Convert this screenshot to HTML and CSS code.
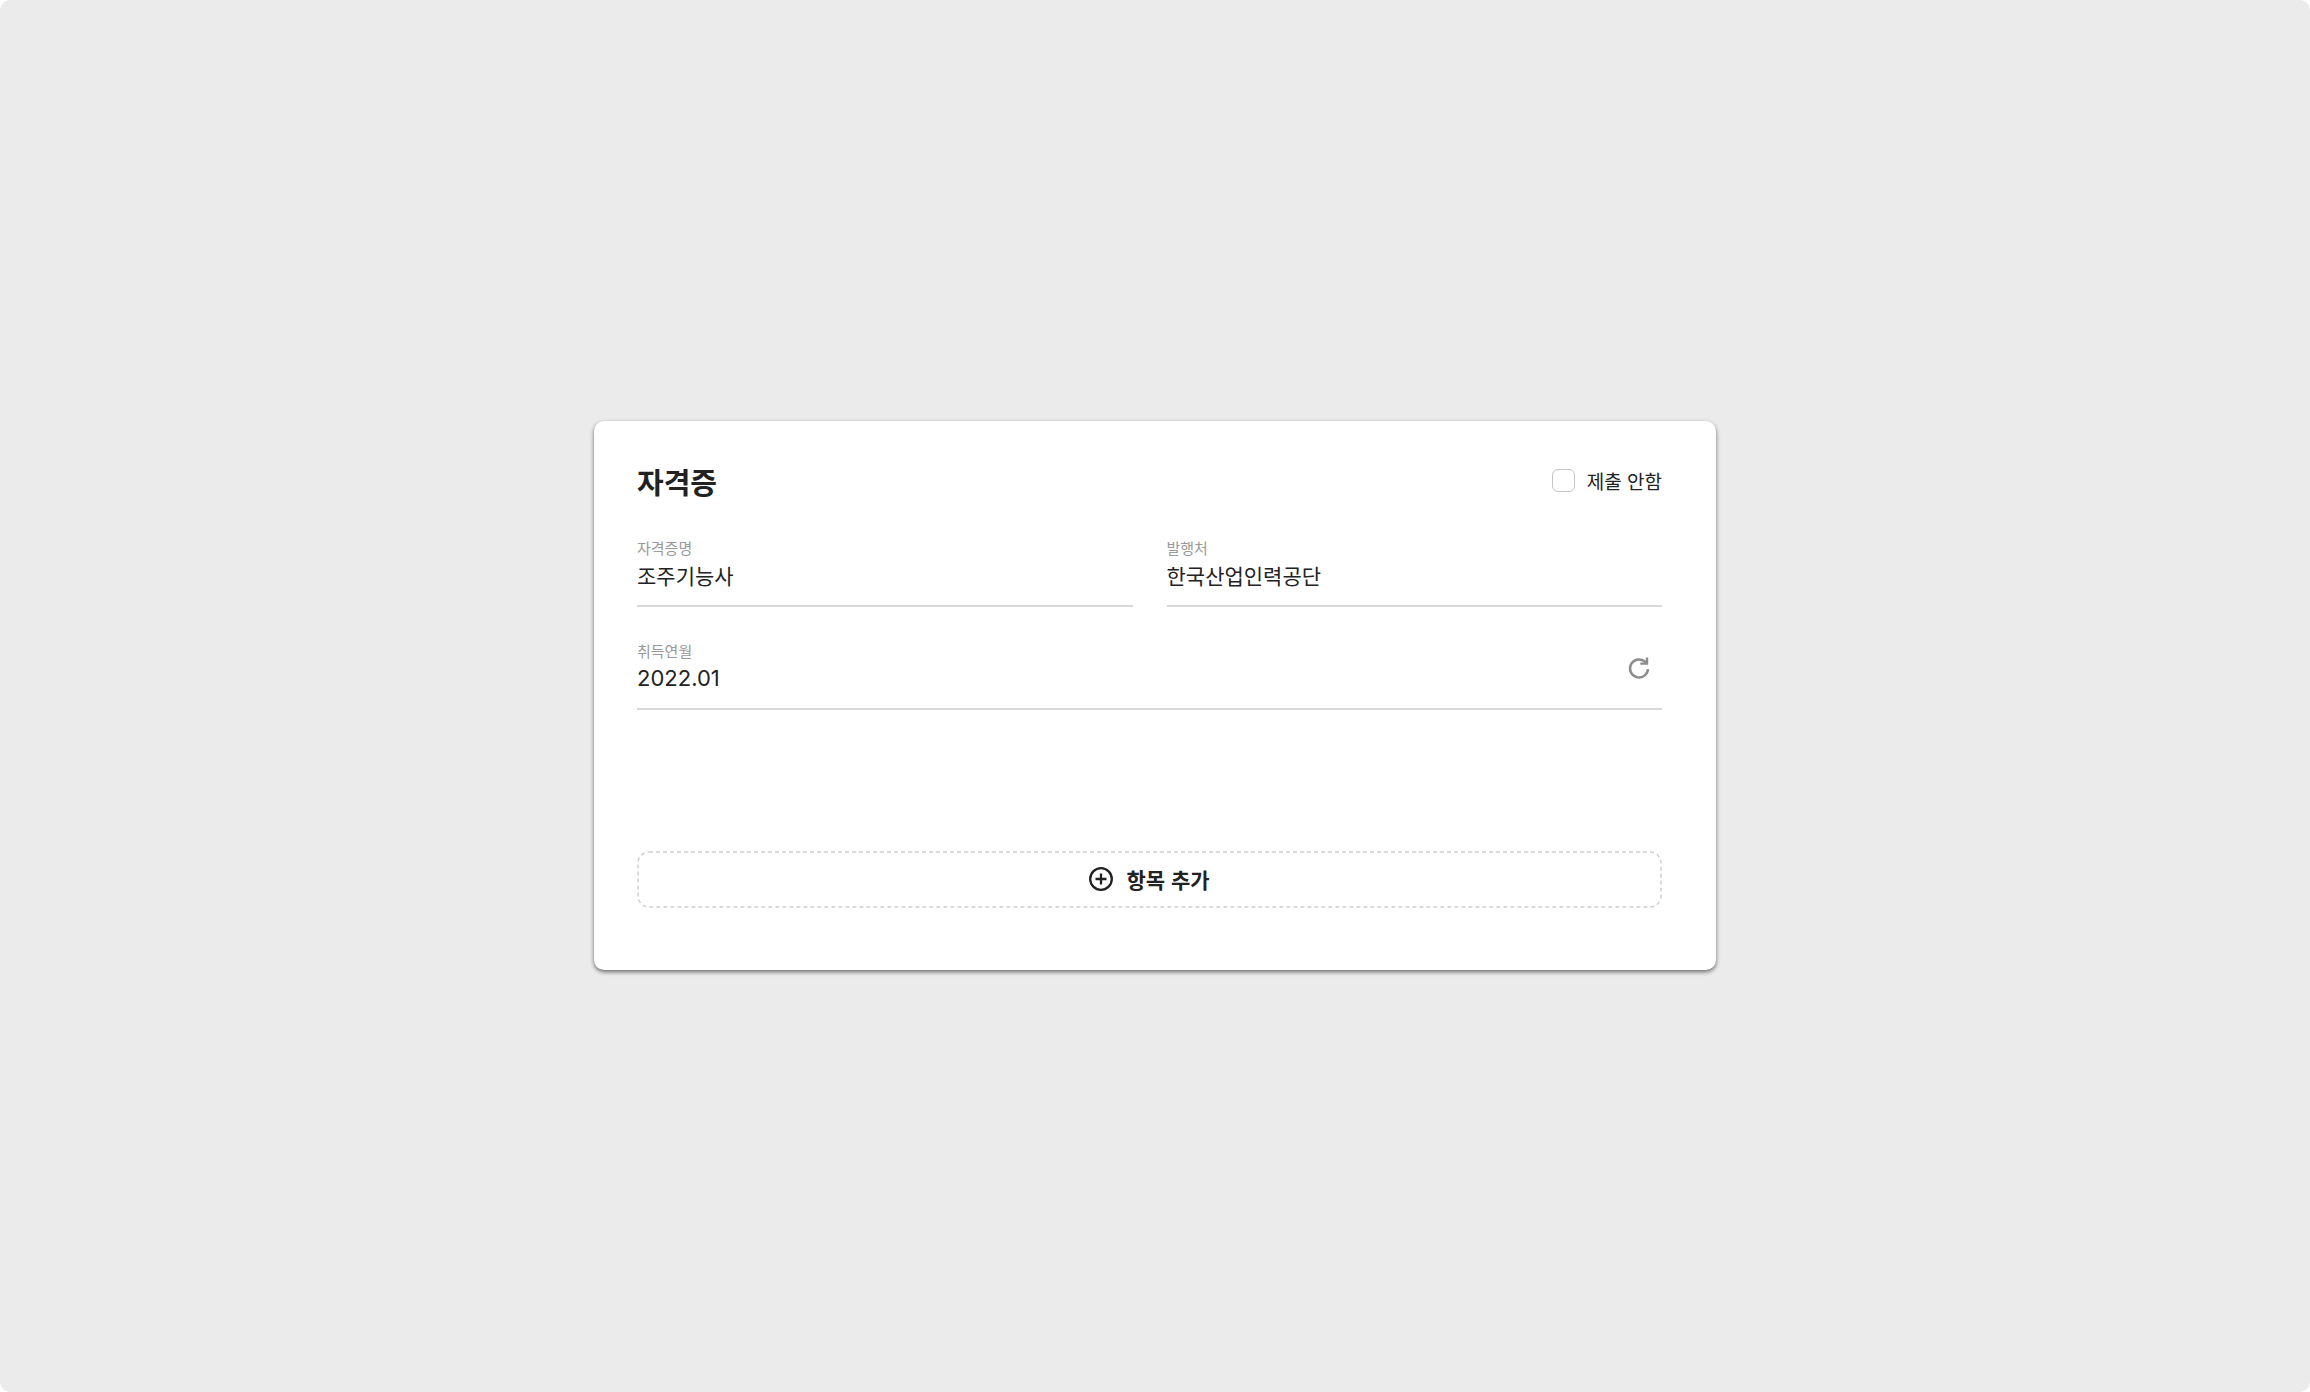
FILE: index.html
```
<!DOCTYPE html>
<html lang="ko">

<head>
  <meta charset="utf-8">
  <meta name="viewport" content="width=device-width, initial-scale=1">
  <title>자격증</title>
  <link rel="stylesheet" href="styles.css">
</head>

<body>
  <main class="page">
    <form class="card">
      <header class="card-header">
        <h1 class="title">자격증</h1>
        <label class="skip"><input type="checkbox" class="checkbox">제출 안함</label>
      </header>

      <div class="fields">
        <div class="field">
          <label for="name">자격증명</label>
          <input id="name" type="text" value="조주기능사">
        </div>
        <div class="field">
          <label for="issuer">발행처</label>
          <input id="issuer" type="text" value="한국산업인력공단">
        </div>
        <div class="field-row">
          <div class="field">
            <label for="date">취득연월</label>
            <input id="date" class="number" type="text" value="2022.01">
          </div>
          <button type="button" class="reset" aria-label="초기화">
            <svg width="24" height="24" viewBox="0 0 24 24" fill="none" stroke="currentColor" stroke-width="2.4">
              <path d="M21 13.200a9 9 0 1 1-3.600-7.900l2 1.500" />
              <path d="M20 1.500V7.600H13.300" />
            </svg>
          </button>
        </div>
      </div>

      <button type="button" class="add">
        <svg class="outline" width="100%" height="100%" aria-hidden="true">
          <rect class="dashes" x="1" y="1" rx="11" />
        </svg>
        <svg width="24" height="24" viewBox="0 0 24 24" fill="none" stroke="currentColor" stroke-width="2.300">
          <circle cx="12" cy="12" r="10.800" />
          <path d="M12 6.500v11M6.500 12h11" />
        </svg>
        <span>항목 추가</span>
      </button>
    </form>
  </main>
</body>

</html>
```
FILE: styles.css
```
* {
  box-sizing: border-box;
}

body {
  margin: 0;
  background: #fff;
  color: #222;
  font-family: "Noto Sans CJK KR", sans-serif;
}

.page {
  display: flex;
  align-items: center;
  justify-content: center;
  min-height: 100vh;
  padding-bottom: 2px;
  border-radius: 10px;
  background: #ebebeb;
}

.card {
  width: 100%;
  max-width: 1122px;
  padding: 43px 54px 62px 43px;
  border-radius: 10px;
  background: #fff;
  box-shadow: 0 2px 4px rgba(0, 0, 0, 0.55);
}

.card-header {
  display: flex;
  align-items: center;
  justify-content: space-between;
  height: 34px;
  margin-bottom: 40px;
}

.title {
  margin: 0;
  font-size: 29px;
  font-weight: 700;
  line-height: 34px;
}

.skip {
  display: flex;
  align-items: center;
  gap: 12px;
  font-size: 19px;
  line-height: 24px;
}

.checkbox {
  appearance: none;
  width: 23px;
  height: 23px;
  margin: 0;
  border: 1px solid #c4c4c4;
  border-radius: 6px;
  background: #fff;
}

.checkbox:checked {
  background: #222;
}

.fields {
  display: grid;
  grid-template-columns: 1fr 1fr;
  gap: 34px;
  margin-bottom: 141px;
}

.field {
  display: flex;
  flex-direction: column;
  gap: 2px;
  flex: 1;
  min-width: 0;
  padding-bottom: 15px;
  border-bottom: 2px solid #d8d8d8;
}

.field label {
  color: #999;
  font-size: 15px;
  line-height: 20px;
}

.field input {
  width: 100%;
  height: 30px;
  padding: 0;
  border: 0;
  outline: 0;
  background: none;
  color: inherit;
  font: inherit;
  font-size: 21px;
  line-height: 30px;
}

.field .number {
  font-family: Inter, sans-serif;
  font-size: 22px;
}

.field-row {
  display: flex;
  align-items: center;
  grid-column: 1 / -1;
  border-bottom: 2px solid #d8d8d8;
}

.field-row .field {
  border: 0;
}

.reset {
  display: flex;
  margin-right: 11px;
  padding: 0 0 12px;
  border: 0;
  background: none;
  color: #8c8c8c;
  cursor: pointer;
}

.add {
  position: relative;
  display: flex;
  align-items: center;
  justify-content: center;
  gap: 13px;
  width: 100%;
  height: 57px;
  padding: 0;
  border: 0;
  border-radius: 12px;
  background: none;
  color: #222;
  font: inherit;
  font-size: 21px;
  font-weight: 700;
  line-height: 30px;
  cursor: pointer;
}

.outline {
  position: absolute;
  inset: 0;
}

.dashes {
  width: calc(100% - 2px);
  height: calc(100% - 2px);
  fill: none;
  stroke: #d0d0d0;
  stroke-width: 1.5;
  stroke-dasharray: 4 3;
}
```
